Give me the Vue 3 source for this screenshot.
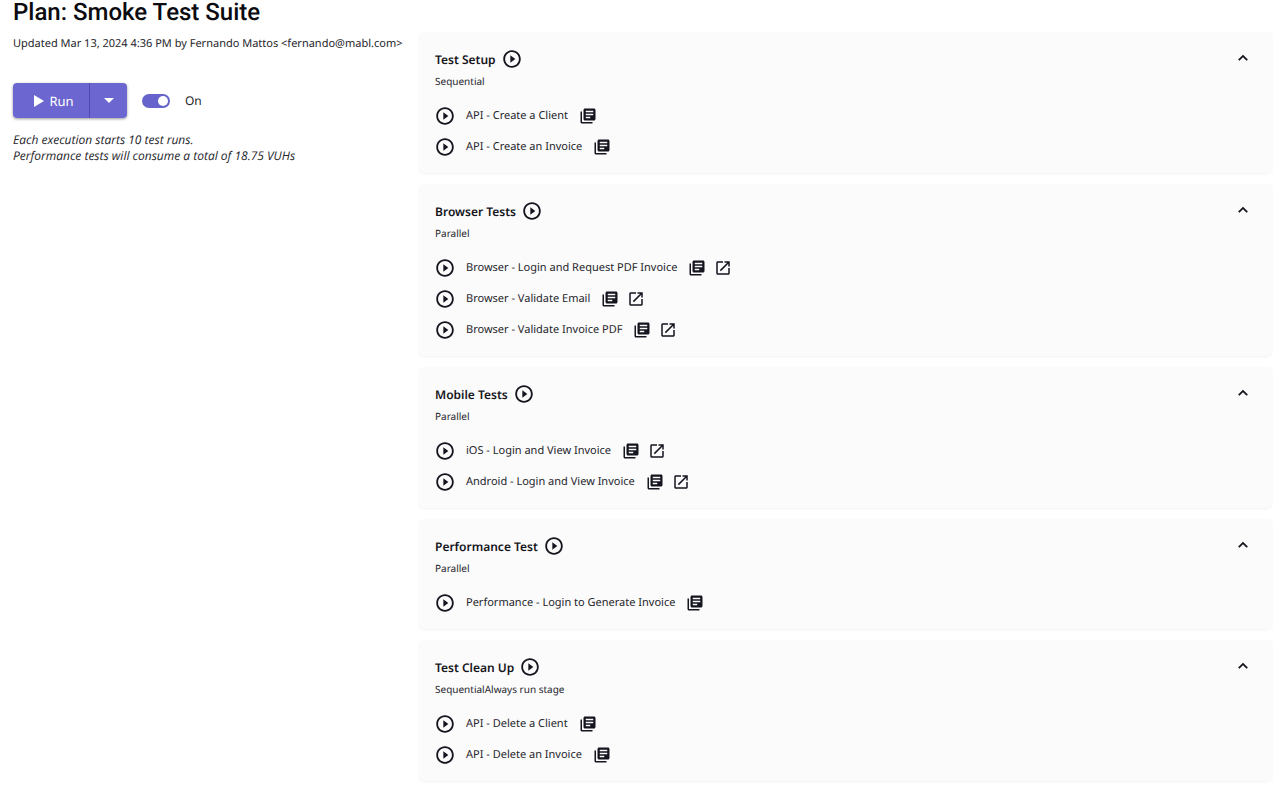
<template>
  <div class="plan-page">
    <aside class="summary">
      <h1>Plan: Smoke Test Suite</h1>
      <p class="updated">Updated Mar 13, 2024 4:36 PM by Fernando Mattos &lt;fernando@mabl.com&gt;</p>
      <div class="actions">
        <div class="run-group">
          <button type="button" class="run">
            <svg width="10" height="12" viewBox="0 0 10 12"><path d="M0 0v12l10-6z" /></svg>
            Run
          </button>
          <button type="button" class="run-menu" aria-label="Run options">
            <svg width="10" height="5" viewBox="0 0 10 5"><path d="M0 0h10L5 5z" /></svg>
          </button>
        </div>
        <label class="toggle">
          <input type="checkbox" v-model="enabled" />
          <span>{{ enabled ? 'On' : 'Off' }}</span>
        </label>
      </div>
      <p class="note">
        Each execution starts 10 test runs.<br />
        Performance tests will consume a total of 18.75 VUHs
      </p>
    </aside>

    <main class="stages">
      <section v-for="stage in stages" :key="stage.name" class="stage">
        <header>
          <h2>{{ stage.name }}</h2>
          <button type="button" class="icon" :aria-label="'Run ' + stage.name">
            <svg width="20" height="20" viewBox="0 0 24 24"><path :d="icons.play" /></svg>
          </button>
          <button type="button" class="icon collapse" aria-label="Toggle stage" @click="stage.open = !stage.open">
            <svg width="18" height="18" viewBox="0 0 24 24" :class="{ closed: !stage.open }"><path :d="icons.up" /></svg>
          </button>
        </header>
        <p class="mode">{{ stage.mode }}</p>
        <ul v-if="stage.open">
          <li v-for="test in stage.tests" :key="test">
            <button type="button" class="icon" :aria-label="'Run ' + test">
              <svg width="20" height="20" viewBox="0 0 24 24"><path :d="icons.play" /></svg>
            </button>
            <a href="#" class="name">{{ test }}</a>
            <button type="button" class="icon library" aria-label="Test details">
              <svg width="18" height="18" viewBox="0 0 24 24"><path :d="icons.library" /></svg>
            </button>
            <button v-if="stage.launch" type="button" class="icon launch" aria-label="Open application">
              <svg width="18" height="18" viewBox="0 0 24 24"><path :d="icons.launch" /></svg>
            </button>
          </li>
        </ul>
      </section>
    </main>
  </div>
</template>

<script setup>
import { ref } from 'vue';

const enabled = ref(true);

const icons = {
  play: 'M10 16.5l6-4.5-6-4.5v9zM12 1.5C6.2 1.5 1.5 6.2 1.5 12S6.2 22.5 12 22.5 22.5 17.8 22.5 12 17.8 1.5 12 1.5zm0 18.8c-4.6 0-8.3-3.7-8.3-8.3S7.4 3.7 12 3.7s8.3 3.7 8.3 8.3-3.7 8.3-8.3 8.3z',
  up: 'M12 7.5l-6.5 6.5 1.7 1.7L12 10.9l4.8 4.8 1.7-1.7z',
  library: 'M4 6H2v14c0 1.1.9 2 2 2h14v-2H4V6zm16-4H8c-1.1 0-2 .9-2 2v12c0 1.1.9 2 2 2h12c1.1 0 2-.9 2-2V4c0-1.1-.9-2-2-2zm-1 9H9V9h10v2zm-4 4H9v-2h6v2zm4-8H9V5h10v2z',
  launch: 'M19 19H5V5h7V3H5c-1.11 0-2 .9-2 2v14c0 1.1.89 2 2 2h14c1.1 0 2-.9 2-2v-7h-2v7zM14 3v2h3.59l-9.83 9.83 1.41 1.41L19 6.41V10h2V3h-7z',
};

const stages = ref([
  {
    name: 'Test Setup',
    mode: 'Sequential',
    open: true,
    tests: ['API - Create a Client', 'API - Create an Invoice'],
  },
  {
    name: 'Browser Tests',
    mode: 'Parallel',
    open: true,
    launch: true,
    tests: [
      'Browser - Login and Request PDF Invoice',
      'Browser - Validate Email',
      'Browser - Validate Invoice PDF',
    ],
  },
  {
    name: 'Mobile Tests',
    mode: 'Parallel',
    open: true,
    launch: true,
    tests: ['iOS - Login and View Invoice', 'Android - Login and View Invoice'],
  },
  {
    name: 'Performance Test',
    mode: 'Parallel',
    open: true,
    tests: ['Performance - Login to Generate Invoice'],
  },
  {
    name: 'Test Clean Up',
    mode: 'SequentialAlways run stage',
    open: true,
    tests: ['API - Delete a Client', 'API - Delete an Invoice'],
  },
]);
</script>

<style>
body {
  background: #fff;
}
</style>

<style scoped>
.plan-page {
  display: flex;
  align-items: flex-start;
  padding: 0 8px 0 13px;
  font-family: "Noto Sans", sans-serif;
  font-size: 11px;
  text-rendering: geometricPrecision;
  color: #25252b;
}
h1, h2, p, ul {
  margin: 0;
  padding: 0;
}
button {
  font-family: inherit;
  text-rendering: inherit;
  border: 0;
  padding: 0;
  cursor: pointer;
}
svg {
  display: block;
  fill: currentColor;
}
.summary {
  flex: none;
  width: 406px;
}
h1 {
  font-family: Roboto, sans-serif;
  font-size: 24px;
  font-weight: 500;
  line-height: 24px;
  color: #0b0b10;
}
.updated {
  margin-top: 11px;
  line-height: 18px;
  white-space: nowrap;
}
.actions {
  display: flex;
  align-items: center;
  margin-top: 30px;
}
.run-group {
  display: flex;
  height: 35px;
  border-radius: 4px;
  overflow: hidden;
  box-shadow: 0 1px 3px rgba(0, 0, 0, 0.4);
}
.run-group button {
  display: flex;
  align-items: center;
  justify-content: center;
  background: #6c67d0;
  color: #fff;
}
.run {
  width: 76px;
  gap: 5px;
  padding-left: 6px;
  font-size: 13px;
}
.run-group .run-menu {
  width: 38px;
  border-left: 1px solid #5048b0;
}
.toggle {
  display: flex;
  align-items: center;
  gap: 15px;
  margin-left: 15px;
  font-size: 12px;
}
.toggle input {
  appearance: none;
  display: flex;
  align-items: center;
  width: 28px;
  height: 14px;
  margin: 0;
  padding: 0 2px;
  box-sizing: border-box;
  border-radius: 7px;
  background: #b5b5bd;
}
.toggle input:checked {
  justify-content: flex-end;
  background: #6763cc;
}
.toggle input::before {
  content: "";
  width: 10px;
  height: 10px;
  border-radius: 50%;
  background: #fff;
}
.note {
  margin-top: 14px;
  font-family: "Open Sans", sans-serif;
  font-size: 12px;
  font-style: italic;
  line-height: 16px;
}
.stages {
  flex: 1;
  display: flex;
  flex-direction: column;
  gap: 11px;
  padding: 32px 0 19px;
}
.stage {
  padding: 15px 16px 11px;
  border-radius: 5px;
  background: #fbfbfb;
  box-shadow: 0 1px 3px rgba(0, 0, 0, 0.05);
}
header {
  display: flex;
  align-items: center;
  height: 24px;
}
h2 {
  margin-right: 6px;
  font-size: 12px;
  font-weight: 600;
  color: #15151b;
}
.icon {
  background: none;
  color: #15151f;
}
.collapse {
  margin-left: auto;
  margin-right: 4px;
  padding-bottom: 2px;
}
.closed {
  transform: rotate(180deg);
}
.mode {
  font-size: 10px;
  line-height: 20px;
}
ul {
  margin-top: 9px;
  list-style: none;
}
li {
  display: flex;
  align-items: center;
  height: 31px;
}
.name {
  margin-left: 11px;
  color: inherit;
  line-height: 16px;
  text-decoration: none;
}
.library {
  margin-left: 11px;
}
.launch {
  margin-left: 8px;
}
</style>
